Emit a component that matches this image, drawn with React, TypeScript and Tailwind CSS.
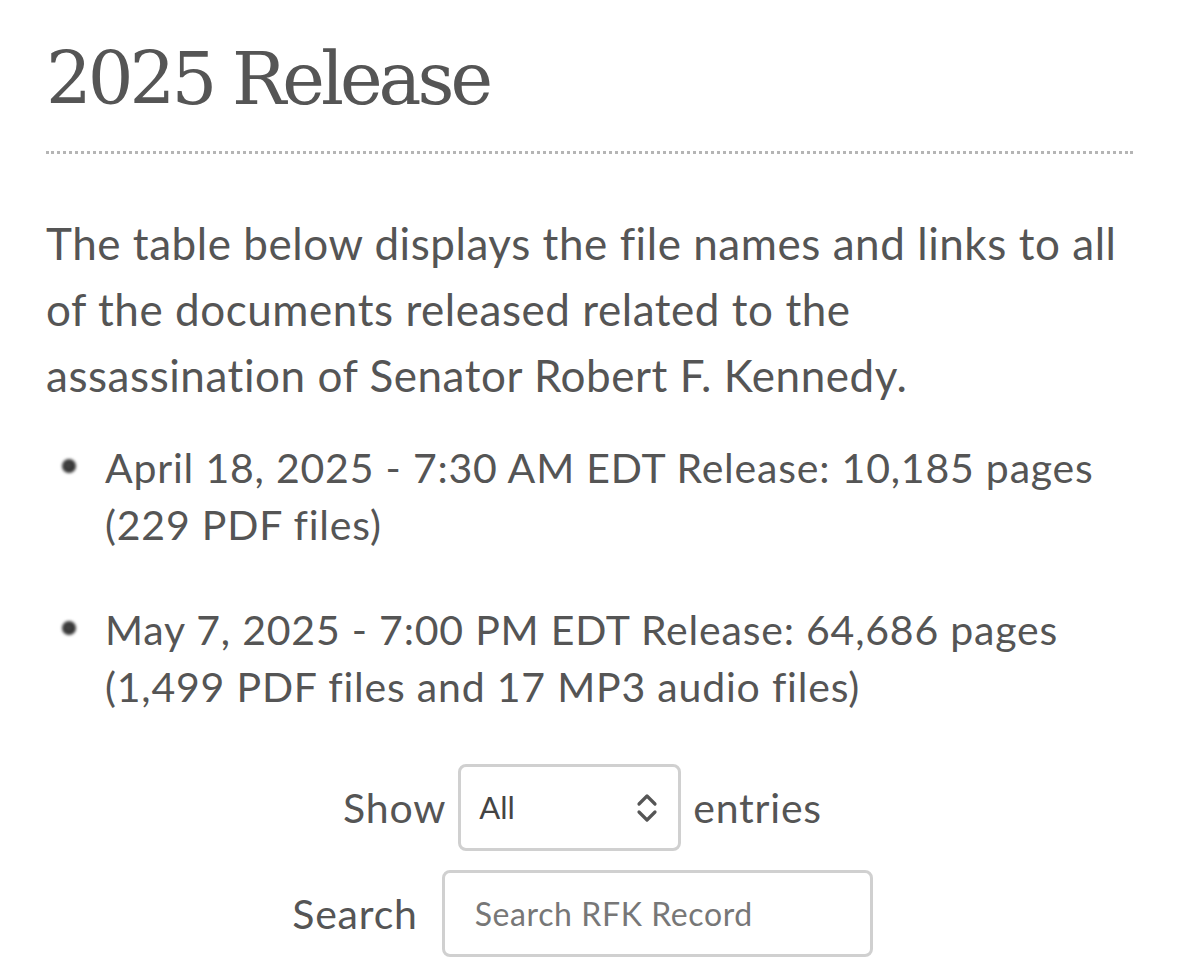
import React from 'react';

const bodyFont = "font-['Lato','Noto_Sans',sans-serif]";

const releases = [
  { line1: 'April 18, 2025 - 7:30 AM EDT Release: 10,185 pages', line2: '(229 PDF files)' },
  { line1: 'May 7, 2025 - 7:00 PM EDT Release: 64,686 pages', line2: '(1,499 PDF files and 17 MP3 audio files)' },
];

const Bullet = () => (
  <span className="mt-[20px] mr-[29px] ml-[16px] block w-[14px] h-[14px] shrink-0 rounded-full bg-[radial-gradient(circle_at_45%_45%,#444,#2a2a2a)] blur-[1.4px]" />
);

const App = () => {
  return (
    <div className={`w-[1179px] h-[977px] overflow-hidden bg-white px-[46px] text-[#555] ${bodyFont}`}>
      {/* Heading */}
      <h1 className="pt-[43px] pb-[36px] border-b-[3px] border-dotted border-[#b5b5b5] font-['DejaVu_Serif',serif] text-[72px] leading-none tracking-[-4px] text-[#555]">
        2025 Release
      </h1>

      {/* Intro */}
      <p className="mt-[56px] text-[44px] leading-[66px] tracking-[0.55px]">
        The table below displays the file names and links to all of the documents released related to the
        <br />
        assassination of Senator Robert F. Kennedy.
      </p>

      {/* Release list */}
      <ul className="mt-[31px] flex flex-col gap-[48px]">
        {releases.map((r) => (
          <li key={r.line1} className="flex text-[41px] leading-[57px] tracking-[0.8px]">
            <Bullet />
            <div>
              <div>{r.line1}</div>
              <div>{r.line2}</div>
            </div>
          </li>
        ))}
      </ul>

      {/* Table controls */}
      <div className="mt-[49px] flex flex-col items-center gap-[19px] pr-[14px]">
        <div className="flex items-center gap-[12px] text-[41px] tracking-[0.8px]">
          <span>Show</span>
          <div className="relative w-[223px] h-[87px] rounded-[8px] border-[3px] border-[#d0d0d0] flex items-center px-[18px]">
            <span className="text-[31px] text-[#444] tracking-normal">All</span>
            <svg className="absolute right-[20px] top-1/2 -translate-y-1/2" width="22" height="30" viewBox="0 0 22 30" fill="none" stroke="#555" strokeWidth="3.2" strokeLinecap="round" strokeLinejoin="round">
              <path d="M3 11 L11 3 L19 11" />
              <path d="M3 19 L11 27 L19 19" />
            </svg>
          </div>
          <span>entries</span>
        </div>
        <div className="flex items-center gap-[24px] text-[41px] tracking-[0.8px]">
          <span>Search</span>
          <div className="w-[431px] h-[87px] rounded-[8px] border-[3px] border-[#d0d0d0] flex items-center px-[30px]">
            <span className="text-[32px] text-[#777] tracking-[0.6px]">Search RFK Record</span>
          </div>
        </div>
      </div>
    </div>
  );
};

export default App;
